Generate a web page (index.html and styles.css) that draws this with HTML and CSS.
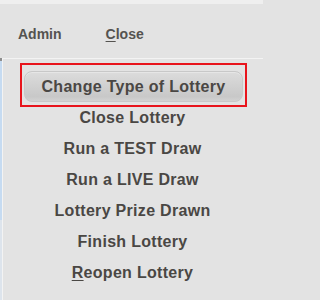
FILE: index.html
```html
<!DOCTYPE html>
<html>
<head>
<meta charset="utf-8">
<link rel="stylesheet" href="styles.css">
</head>
<body>
<div class="page">
  <div class="topstrip"></div>
  <header class="menubar">
    <span class="mb-item admin">Admin</span>
    <span class="mb-item close"><u>C</u>lose</span>
  </header>
  <div class="lower">
    <div class="edge"></div>
    <div class="panel">
      <div class="row first">
        <div class="btn">Change Type of Lottery</div>
        <div class="highlight"></div>
      </div>
      <div class="row">Close Lottery</div>
      <div class="row">Run a TEST Draw</div>
      <div class="row">Run a LIVE Draw</div>
      <div class="row">Lottery Prize Drawn</div>
      <div class="row">Finish Lottery</div>
      <div class="row"><u>R</u>eopen Lottery</div>
    </div>
  </div>
</div>
</body>
</html>
```
FILE: styles.css
```css
html, body {
  margin: 0;
  padding: 0;
  height: 300px;
  overflow: hidden;
  background: #e3e3e3;
  font-family: "Liberation Sans", Arial, sans-serif;
}
.page {
  width: 263px;
  height: 300px;
  overflow: hidden;
}
.topstrip {
  height: 4px;
  background: #efefef;
}
.menubar {
  height: 54px;
  display: flex;
  align-items: flex-start;
  padding-left: 18px;
  box-sizing: border-box;
  padding-top: 22px;
}
.mb-item {
  font-size: 14px;
  font-weight: bold;
  color: #555350;
  line-height: 16px;
}
.mb-item u {
  text-decoration-thickness: 1px;
  text-underline-offset: 2px;
}
.admin {
  margin-right: 44px;
}
.lower {
  display: flex;
  height: 242px;
}
.edge {
  width: 2px;
  background: linear-gradient(#8e8e8e 0px, #8e8e8e 3px, #c6dbf1 3px, #c6dbf1 162px, #dde4ec 162px);
}
.panel {
  flex: 1;
  border-top: 1px solid #f3f3f3;
  border-left: 1px solid #f3f3f3;
  background: #e3e3e3;
  padding-top: 12px;
  display: flex;
  flex-direction: column;
}
.row {
  height: 31px;
  display: flex;
  align-items: center;
  justify-content: center;
  font-size: 16px;
  font-weight: bold;
  letter-spacing: 0.3px;
  color: #4a4744;
  padding-right: 1px;
}
.row u {
  text-decoration-thickness: 1px;
  text-underline-offset: 2px;
}
.row.first {
  position: relative;
  justify-content: flex-start;
  padding-left: 21px;
  padding-right: 20px;
}
.btn {
  flex: 1;
  height: 31px;
  box-sizing: border-box;
  border: 1px solid #c8c8c8;
  border-radius: 8px;
  background: linear-gradient(#dcdcdc, #c8c8c8 85%, #d2d2d2);
  display: flex;
  align-items: center;
  justify-content: center;
  box-shadow: inset 0 1px 0 #e6e6e6;
}
.highlight {
  position: absolute;
  left: 17px;
  right: 16px;
  top: -8px;
  bottom: -5px;
  border: 2px solid #e8141c;
}
```
